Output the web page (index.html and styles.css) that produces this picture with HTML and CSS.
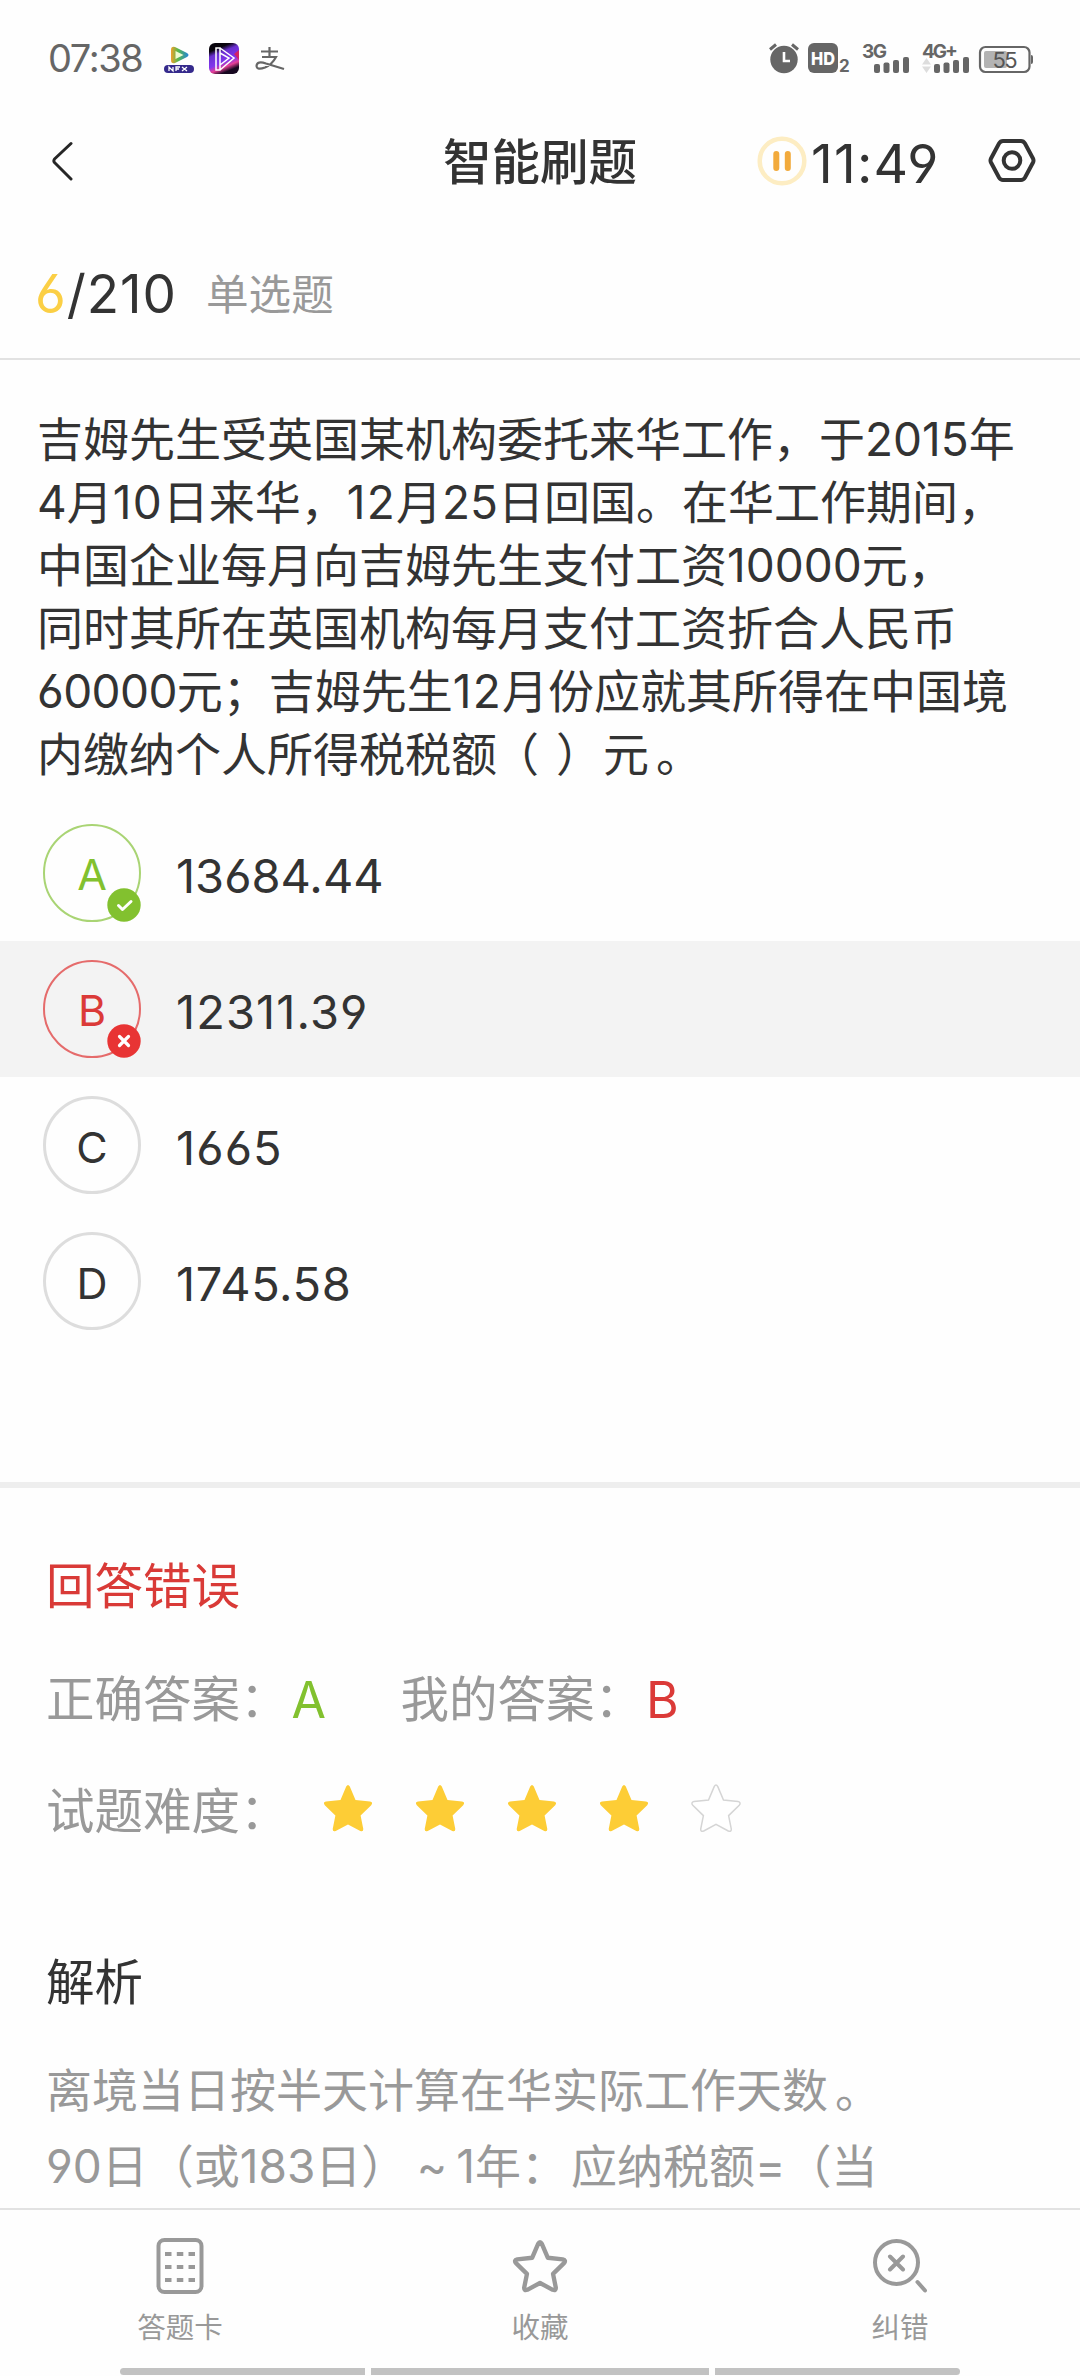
FILE: index.html
```html
<!DOCTYPE html>
<html lang="zh-CN">
<head>
<meta charset="utf-8">
<title>智能刷题</title>
<link rel="stylesheet" href="styles.css">
</head>
<body>
<svg width="0" height="0" class="defs">
  <symbol id="star" viewBox="0 0 50 48"><path d="M23.2 2.6Q25 -.6 26.8 2.6L32.5 16L47 17.6Q50.5 18.4 48.2 21.2L37.6 31.6L40.3 45Q40.4 48.2 37.3 47L25 40.4L12.7 47Q9.600 48.2 9.700 45L12.400 31.600L1.800 21.200Q-.500 18.400 3 17.600L17.500 16Z"/></symbol>
</svg>
<div class="screen">
  <header class="status">
    <span class="clock">07:38</span>
    <svg class="apps" width="124" height="36" viewBox="0 0 124 36">
      <defs><linearGradient id="g1" x1="0" x2="1"><stop offset="0" stop-color="#f0a02c"/><stop offset=".4" stop-color="#58b84a"/><stop offset="1" stop-color="#2585d8"/></linearGradient>
      <linearGradient id="g2" x1="0" y1="0" x2=".4" y2="1"><stop offset=".25" stop-color="#08040c"/><stop offset=".4" stop-color="#6a2fd0"/><stop offset=".7" stop-color="#8236ee"/><stop offset=".85" stop-color="#e73f96"/><stop offset="1" stop-color="#160820"/></linearGradient></defs>
      <path d="M8 10Q8 6 12 7L24 13Q27 15 24 17L12 23Q8 24 8 20Z" fill="url(#g1)"/><path d="M12.500 11l8 4-8 4z" fill="#eefbd0"/>
      <rect x="1" y="25" width="30" height="8" rx="4" fill="#352a8c"/>
      <path d="M6 31v-4l4 4v-4M13 31v-4h4M13 29h3M19 27l5 4M24 27l-5 4" stroke="#fff" stroke-width="1.300" fill="none"/>
      <rect x="46" y="3" width="30" height="31" rx="6" fill="url(#g2)"/><path d="M71 14l5-4v10z" fill="#d32366"/>
      <path d="M53 8h4v22h-4zM57 8l14 10-14 12M57 13l9 5-9 7" fill="none" stroke="#fff" stroke-width="1.500"/>
      <path d="M98 11.500h17M106.500 7v10M99 17h14Q109 24.500 102 27.500Q94 30.500 93.500 26Q94 20.500 103 23.500L121 29" fill="none" stroke="#666" stroke-width="2.200"/>
    </svg>
    <svg class="sys" width="270" height="36" viewBox="765 40 270 36">
      <g fill="#666"><circle cx="783" cy="59.500" r="13.700"/><path d="M769 49.500l6-5M797 49.500l-6-5" stroke="#666" stroke-width="3"/><path d="M783 52v9h6" fill="none" stroke="#fff" stroke-width="2.600"/>
      <rect x="807" y="43" width="30" height="30" rx="6"/>
      <rect x="873" y="64" width="6" height="9" rx="2"/><rect x="882.500" y="62.500" width="6" height="10.500" rx="2"/><rect x="892" y="60" width="6" height="13" rx="2"/><rect x="902" y="57" width="6" height="16" rx="2"/>
      <rect x="933" y="64" width="6" height="9" rx="2"/><rect x="942.500" y="62.500" width="6" height="10.500" rx="2"/><rect x="952" y="60" width="6" height="13" rx="2"/><rect x="962" y="57" width="6" height="16" rx="2"/>
      <path d="M1030 55q2 0 2 2v5q0 2-2 2z"/>
      </g>
      <path d="M921 64.500l4.500-6.500 4.500 6.500zM921 66.500l4.500 6.500 4.500-6.500z" fill="#ddd"/>
      <rect x="979" y="47" width="49.500" height="25" rx="5.500" fill="none" stroke="#666" stroke-width="2.200"/>
      <rect x="983" y="51" width="23" height="17" rx="2" fill="#b3b3b3"/>
      <text x="810" y="65" class="s-hd" textLength="24" lengthAdjust="spacingAndGlyphs">HD</text>
      <text x="838" y="72" class="s-two">2</text>
      <text x="861" y="58" class="s-net" textLength="25">3G</text>
      <text x="921" y="58" class="s-net" textLength="36">4G+</text>
      <text x="991.500" y="68" class="s-bat" textLength="25">55</text>
    </svg>
  </header>

  <nav class="bar">
    <svg class="lift" width="22" height="42" viewBox="0 0 22 42" fill="none" stroke="#262626" stroke-width="3" stroke-linecap="round" stroke-linejoin="round"><path d="M20 3.500L3.500 19Q2.200 21 3.500 22.500L20 39"/></svg>
    <h1 class="title">智能刷题</h1>
    <div class="timer">
      <svg class="lift" width="50" height="50" viewBox="0 0 50 50"><circle cx="25" cy="25" r="22.300" fill="none" stroke="#fdedc3" stroke-width="4.500"/><path d="M19.300 18v14M30.800 18v14" stroke="#f2aa3c" stroke-width="6" stroke-linecap="round"/></svg>
      <span class="time">11:49</span>
    </div>
    <svg class="lift" width="48" height="46" viewBox="0 0 48 46" fill="none" stroke="#333" stroke-width="4"><path d="M15 3H33Q35.500 3 37 5.500L45 20.500Q46 22.500 45 24.500L37 39.500Q35.500 42 33 42H15Q12.500 42 11 39.500L3 24.500Q2 22.500 3 20.500L11 5.500Q12.500 3 15 3Z"/><circle cx="24" cy="22.500" r="8.300"/></svg>
  </nav>

  <div class="progress"><span class="count"><b>6</b>/210</span><span class="kind">单选题</span></div>

  <main>
    <p class="question">吉姆先生受英国某机构委托来华工作，于2015年<br>4月<span class="loose">10</span>日来华，<span class="loose">12</span>月25日回国。在华工作期间，<br>中国企业每月向吉姆先生支付工资10000元，<br>同时其所在英国机构每月支付工资折合人民币<br><span class="tight">60000</span>元；吉姆先生<span class="loose">12</span>月份应就其所得在中国境<br>内缴纳个人所得税税额<span class="blank">（ ）</span>元<span class="stop">。</span></p>
    <ul class="options">
      <li class="right"><span class="mark">A<svg class="badge" width="34" height="34" viewBox="0 0 34 34"><circle cx="17" cy="17" r="16.700" fill="#82c12f"/><path d="M11.500 17.500l4 4L24 13.500" fill="none" stroke="#fff" stroke-width="3" stroke-linecap="round" stroke-linejoin="round"/></svg></span><span class="value">13684.44</span></li>
      <li class="wrong"><span class="mark">B<svg class="badge" width="34" height="34" viewBox="0 0 34 34"><circle cx="17" cy="17" r="16.700" fill="#e83434"/><path d="M12.500 12.500l9 9M21.500 12.500l-9 9" stroke="#fff" stroke-width="3.200" stroke-linecap="round"/></svg></span><span class="value wide">12311.39</span></li>
      <li><span class="mark">C</span><span class="value wide">1665</span></li>
      <li><span class="mark">D</span><span class="value mid">1745.58</span></li>
    </ul>
    <section class="result">
      <h2 class="verdict">回答错误</h2>
      <div class="row"><span class="label">正确答案：</span><span class="ans good">A</span><span class="label">我的答案：</span><span class="ans bad">B</span></div>
      <div class="row"><span class="label">试题难度：</span>
        <span class="stars"><svg><use href="#star"/></svg><svg><use href="#star"/></svg><svg><use href="#star"/></svg><svg><use href="#star"/></svg><svg class="off"><use href="#star"/></svg></span>
      </div>
      <h2 class="heading">解析</h2>
      <p class="explain">离境当日按半天计算在华实际工作天数<span class="stop">。</span><br>90日（或183日）<span class="tilde">~</span>1年<span class="colon">：</span>应纳税额=（当</p>
    </section>
  </main>

  <footer class="tabs">
    <a class="tab"><svg width="60" height="60" viewBox="0 0 60 60" fill="none" stroke="#999" stroke-width="4"><rect x="8.500" y="4" width="43" height="52" rx="6"/><path d="M15 18h6.500M26.800 18h6.500M38.500 18h6.500M15 31h6.500M26.800 31h6.500M38.500 31h6.500M15 44h6.500M26.800 44h6.500M38.500 44h6.500"/></svg>答题卡</a>
    <a class="tab"><svg width="60" height="60" viewBox="-4 -5 58 58" fill="none" stroke="#999" stroke-width="4.200" stroke-linejoin="round"><use href="#star" width="50" height="48"/></svg>收藏</a>
    <a class="tab"><svg width="60" height="60" viewBox="0 0 60 60" fill="none" stroke="#999" stroke-width="4" stroke-linecap="round"><circle cx="26.500" cy="26.500" r="21.500"/><path d="M20 20.500l13 13M33 20.500l-13 13M47.500 46l7.500 8.500"/></svg>纠错</a>
  </footer>
  <div class="grips"><i></i><i></i><i></i></div>
</div>
</body>
</html>
```
FILE: styles.css
```css
* { box-sizing: border-box; margin: 0; padding: 0; }
body {
  width: 1080px; height: 2376px; overflow: hidden; background: #fefefe; color: #333;
  font-family: Inter, "Noto Sans CJK SC", sans-serif;
  font-feature-settings: "cv03", "cv04"; text-spacing-trim: space-all;
}
.defs { position: absolute; }
svg { display: block; flex: none; }
#star { overflow: visible; }
.screen { height: 2376px; display: flex; flex-direction: column; }

.status { height: 112px; padding: 4px 44px 0 48px; display: flex; align-items: center; color: #666; }
.clock { width: 115px; font-size: 38px; letter-spacing: -1.400px; }
.sys { margin-left: auto; }
.sys text { fill: #666; font-family: Inter, sans-serif; font-weight: 700; }
.sys .s-hd { fill: #fff; font-size: 18px; font-weight: 800; }
.sys .s-two { font-size: 17px; }
.sys .s-net { font-size: 19px; }
.sys .s-bat { fill: #555; font-size: 22px; font-weight: 400; }

.bar { height: 102px; padding: 0 45px 0 51px; display: grid; grid-template-columns: 392px 314px 231px 47px; align-items: center; }
.title { font-size: 48.500px; line-height: 100px; font-weight: 500; white-space: nowrap; }
.timer { display: flex; align-items: center; gap: 4px; }
.time { font-size: 53.500px; letter-spacing: 1.200px; }
.lift { margin-bottom: 5px; }

.progress { height: 146px; padding: 16px 35px 0; display: flex; align-items: center; border-bottom: 2px solid #e2e2e2; }
.count { width: 171px; font-size: 53px; letter-spacing: .9px; white-space: nowrap; }
.kind { padding-bottom: 6px; font-size: 42.600px; color: #999; }
.count b { color: #fbcf45; font-weight: 400; }

.question { height: 445px; padding: 48px 37px 0; font-size: 46px; line-height: 63px; white-space: nowrap; }
.loose { letter-spacing: 1.200px; }
.tight { letter-spacing: -.6px; }
.blank { letter-spacing: 1px; word-spacing: 2px; margin-left: -4px; }
.stop { margin-left: 7px; }
.options { height: 677px; list-style: none; }
.options li { height: 136px; padding-left: 43px; display: flex; align-items: center; gap: 35px; }
.options .wrong { background: #f3f3f3; }
.mark { position: relative; width: 98px; height: 98px; border: 3px solid #ddd; border-radius: 50%; font-size: 43px; line-height: 96px; text-align: center; }
.right .mark { border: 2px solid #a9d474; color: #82c12f; }
.wrong .mark { border: 2px solid #e56b6b; color: #db3a38; }
.badge { position: absolute; right: -2px; bottom: -2px; }
.value { padding-top: 5px; font-size: 47px; }
.wide { letter-spacing: 1.100px; }
.mid { letter-spacing: .6px; }

.result { height: 726px; padding: 62px 46px 0; border-top: 6px solid #eee; font-size: 48.500px; line-height: 74px; overflow: hidden; }
.verdict { font-size: 48.500px; font-weight: 400; color: #d93a37; }
.row { display: flex; align-items: center; height: 74px; margin-top: 39px; color: #999; }
.row + .row { margin-top: 38px; }
.ans { width: 112px; padding-left: 3px; font-size: 50px; }
.good { color: #82c12f; }
.bad { color: #db3a38; }
.stars { display: flex; gap: 42px; margin: -8px 0 0 34px; }
.stars svg { width: 50px; height: 48px; fill: #fdcd36; overflow: visible; }
.stars .off { fill: #fff; stroke: #d5d5d5; stroke-width: 1.500; }
.heading { margin-top: 97px; font-size: 48.500px; font-weight: 400; }
.explain { margin-top: 32px; font-size: 46px; line-height: 76px; color: #999; white-space: nowrap; }
.tilde { display: inline-block; width: 49px; text-align: center; }
.colon { margin-right: 4px; }

.tabs { height: 160px; padding-top: 26px; border-top: 2px solid #e2e2e2; display: grid; grid-template-columns: repeat(3, 1fr); }
.tab { display: flex; flex-direction: column; align-items: center; gap: 12px; font-size: 28.500px; line-height: 40px; color: #999; }
.grips { height: 7px; padding: 0 120px; display: grid; grid-template-columns: 245px 338px 245px; gap: 6px; }
.grips i { background: #c2c2c2; }
.grips i:first-child { border-radius: 4px 0 0 4px; }
.grips i:last-child { border-radius: 0 4px 4px 0; }
```
